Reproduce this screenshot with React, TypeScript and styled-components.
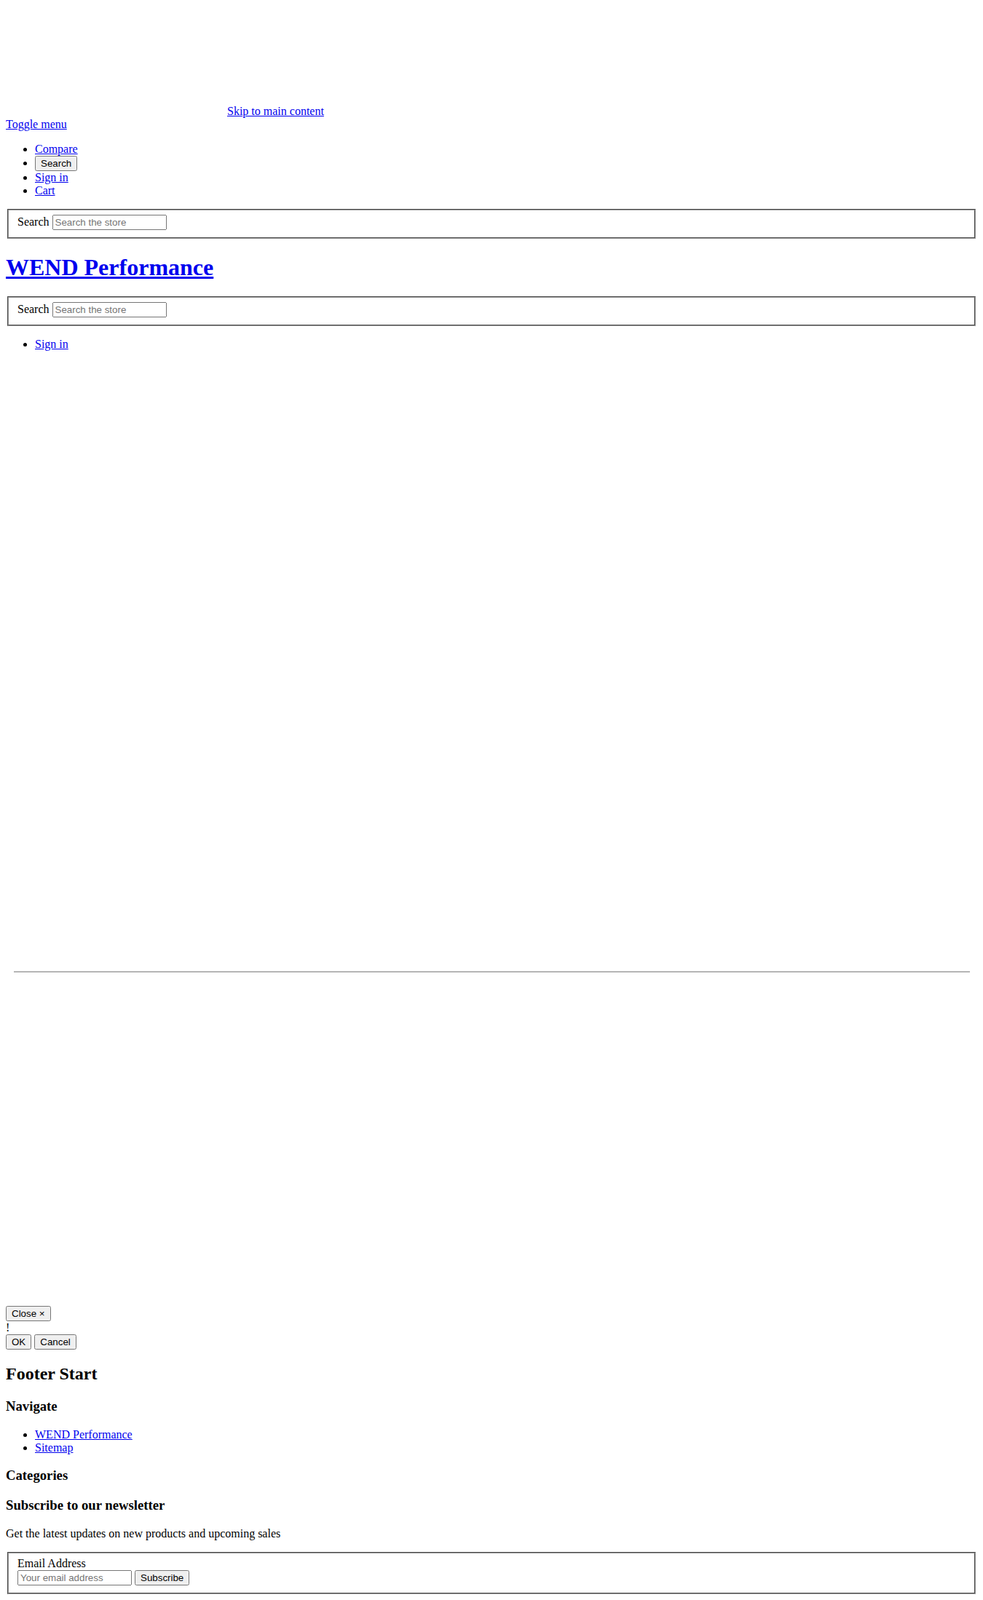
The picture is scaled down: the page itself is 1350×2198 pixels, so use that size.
import * as React from "react";
import styled, { createGlobalStyle } from "styled-components";

const GlobalStyle = createGlobalStyle`
  body {
    margin: 8px;
    background: #fff;
    color: #000;
    font-family: "Liberation Serif", "Times New Roman", serif;
    font-size: 16px;
  }

  a {
    color: #0000ee;
  }

  button,
  input {
    font-family: "Liberation Sans", Arial, sans-serif;
    font-size: 13.333px;
  }
`;

const TopLine = styled.div``;

const IconSprite = styled.svg`
  width: 300px;
  height: 150px;
`;

const MenuToggle = styled.a`
  display: block;
`;

const NavList = styled.ul``;

const SearchForm = styled.form``;

const FieldBox = styled.fieldset`
  border: 2px groove #9a9a9a;
`;

const FieldLabel = styled.label<{ $block?: boolean }>`
  display: ${(props) => (props.$block ? "block" : "inline")};
`;

const TextInput = styled.input`
  box-sizing: border-box;
  width: 157px;
`;

const SiteTitle = styled.h1``;

const MainArea = styled.main`
  height: 828px;
`;

const Divider = styled.hr`
  margin: 8px 10px 8px 11px;
  height: 0;
  border: 0;
  border-top: 2px solid #b5b5b5;
`;

const Carousel = styled.section`
  height: 450px;
`;

const Notice = styled.div`
  color: #000;
`;

const FooterTitle = styled.h2``;

const FooterHeading = styled.h3``;

const Lead = styled.p``;

function StoreSearch() {
  return (
    <SearchForm onSubmit={(e) => e.preventDefault()}>
      <FieldBox>
        <FieldLabel>Search</FieldLabel>{" "}
        <TextInput type="search" placeholder="Search the store" />
      </FieldBox>
    </SearchForm>
  );
}

export default function App() {
  return (
    <>
      <GlobalStyle />

      <TopLine>
        <IconSprite aria-hidden="true" />{" "}
        <a href="#main">Skip to main content</a>
      </TopLine>

      <MenuToggle href="#menu">Toggle menu</MenuToggle>

      <NavList>
        <li>
          <a href="#compare">Compare</a>
        </li>
        <li>
          <button type="button">Search</button>
        </li>
        <li>
          <a href="#login">Sign in</a>
        </li>
        <li>
          <a href="#cart">Cart</a>
        </li>
      </NavList>

      <StoreSearch />

      <SiteTitle>
        <a href="#home">WEND Performance</a>
      </SiteTitle>

      <StoreSearch />

      <NavList>
        <li>
          <a href="#login">Sign in</a>
        </li>
      </NavList>

      <MainArea id="main" />

      <Divider />

      <Carousel />

      <button type="button">Close ×</button>
      <Notice>!</Notice>
      <div>
        <button type="button">OK</button> <button type="button">Cancel</button>
      </div>

      <FooterTitle>Footer Start</FooterTitle>

      <FooterHeading>Navigate</FooterHeading>
      <NavList>
        <li>
          <a href="#home">WEND Performance</a>
        </li>
        <li>
          <a href="#sitemap">Sitemap</a>
        </li>
      </NavList>

      <FooterHeading>Categories</FooterHeading>

      <FooterHeading>Subscribe to our newsletter</FooterHeading>
      <Lead>Get the latest updates on new products and upcoming sales</Lead>

      <SearchForm onSubmit={(e) => e.preventDefault()}>
        <FieldBox>
          <FieldLabel $block>Email Address</FieldLabel>
          <TextInput type="email" placeholder="Your email address" />{" "}
          <button type="submit">Subscribe</button>
        </FieldBox>
      </SearchForm>
    </>
  );
}
